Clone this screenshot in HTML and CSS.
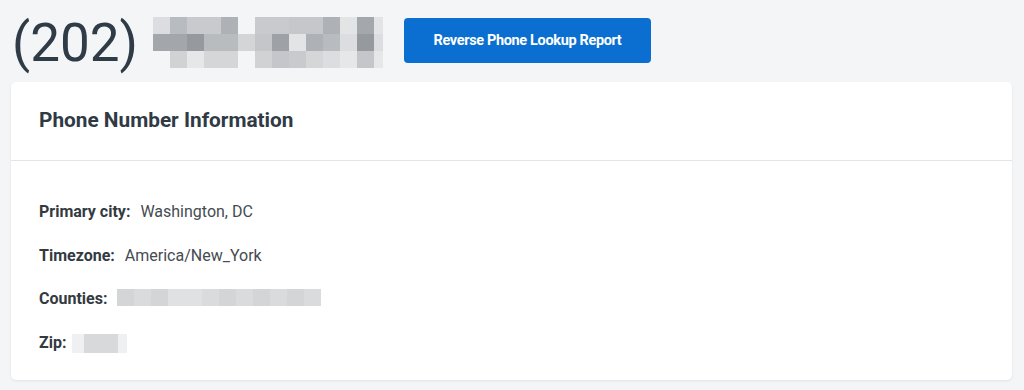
FILE: index.html
```html
<!DOCTYPE html>
<html lang="en">
<head>
    <meta charset="UTF-8">
    <meta name="viewport" content="width=device-width, initial-scale=1.0">
    <title>(202) Phone Number Information</title>
    <link rel="stylesheet" href="styles.css">
</head>
<body>
    <div class="page">
        <!-- Number + report button -->
        <div class="title-row">
            <h1 class="number">(202)</h1>
            <div class="pixels">
                <span class="a"></span><span class="b"></span><span class="c"></span><span class="c"></span><span class="d"></span><span class="e"></span><span class="c"></span><span class="c"></span><span class="f"></span><span class="f"></span><span class="d"></span><span class="g"></span><span class="h"></span><span class="g"></span>
                <span class="i"></span><span class="i"></span><span class="j"></span><span class="k"></span><span class="k"></span><span class="l"></span><span class="q"></span><span class="m"></span><span class="g"></span><span class="d"></span><span class="k"></span><span class="a"></span><span class="j"></span><span class="a"></span>
                <span class="e"></span><span class="n"></span><span class="o"></span><span class="p"></span><span class="p"></span><span class="e"></span><span class="n"></span><span class="q"></span><span class="c"></span><span class="p"></span><span class="a"></span><span class="o"></span><span class="q"></span><span class="o"></span>
            </div>
            <button class="report-btn">Reverse Phone Lookup Report</button>
        </div>

        <!-- Info card -->
        <div class="card">
            <div class="card-header">
                <h2>Phone Number Information</h2>
            </div>
            <div class="card-body">
                <div class="info-row"><span class="label">Primary city:</span> <span class="value">Washington, DC</span></div>
                <div class="info-row"><span class="label">Timezone:</span> <span class="value">America/New_York</span></div>
                <div class="info-row">
                    <span class="label">Counties:</span>
                    <span class="blur-bar">
                        <i></i><i></i><i></i><i></i><i></i><i></i><i></i><i></i><i></i><i></i><i></i><i></i>
                    </span>
                </div>
                <div class="info-row">
                    <span class="label">Zip:</span>
                    <span class="blur-zip"><i></i></span>
                </div>
            </div>
        </div>
    </div>
</body>
</html>
```

FILE: styles.css
```css
* { margin: 0; padding: 0; box-sizing: border-box; }
body { font-family: Roboto, "Liberation Sans", Arial, sans-serif; background: #f4f5f7; color: #2f3a45; }

.page { width: 1024px; height: 390px; padding: 0 12px 0 11px; }

.title-row { display: flex; align-items: center; height: 82px; padding-left: 1px; }
.number { font-size: 53px; font-weight: 400; color: #2f3b47; line-height: 1; margin-top: 4px; }

.pixels {
    display: grid; grid-template-columns: repeat(13, 17px) 9px;
    grid-template-rows: repeat(3, 17px); margin-left: 15px; margin-top: 2px;
}
.pixels .a { background: #dcdde0; }
.pixels .b { background: #b8bbbf; }
.pixels .c { background: #c8cacd; }
.pixels .d { background: #aeb1b5; }
.pixels .e { background: transparent; }
.pixels .f { background: #c5c7ca; }
.pixels .g { background: #e3e4e6; }
.pixels .h { background: #a4a7ab; }
.pixels .i { background: #a3a6aa; }
.pixels .j { background: #969a9f; }
.pixels .k { background: #b9bcbf; }
.pixels .l { background: #d3d5d7; }
.pixels .m { background: #9ea2a7; }
.pixels .n { background: #d0d2d4; }
.pixels .o { background: #e6e7e9; }
.pixels .p { background: #d4d6d8; }
.pixels .q { background: #c4c6c9; }

.report-btn {
    margin-left: 21px; width: 247px; height: 45px; margin-top: -1px;
    background: #0a6fd1; color: white; border: none; border-radius: 4px;
    font-family: Roboto, "Liberation Sans", Arial, sans-serif;
    font-size: 14.5px; font-weight: 700; letter-spacing: -0.35px; cursor: pointer;
}
.report-btn:hover { background: #095fb3; }

.card {
    background: white; border-radius: 5px; height: 298px;
    box-shadow: 0 1px 3px rgba(0, 0, 0, 0.08);
}
.card-header { height: 79px; padding: 0 28px; display: flex; align-items: center; border-bottom: 1px solid #e3e5e8; }
.card-header h2 { font-size: 20.8px; font-weight: 700; color: #2f3a45; margin-top: -2px; }

.card-body { padding: 29px 28px 0; }
.info-row { display: flex; align-items: center; height: 43.5px; font-size: 16px; }
.label { font-weight: 700; color: #333a41; margin-right: 10px; }
.value { color: #454b51; }

.blur-bar { display: flex; height: 17px; margin-top: -2px; }
.blur-bar i { width: 17px; background: #dadbdd; }
.blur-bar i:nth-child(odd) { background: #d4d5d7; }
.blur-bar i:nth-child(4), .blur-bar i:nth-child(5) { background: #e0e1e3; }

.blur-zip { display: flex; width: 55px; height: 19px; background: #eff0f1; padding-left: 12px; margin-left: -4px; margin-top: 2px; }
.blur-zip i { width: 34px; background: #d8d9db; }
```
